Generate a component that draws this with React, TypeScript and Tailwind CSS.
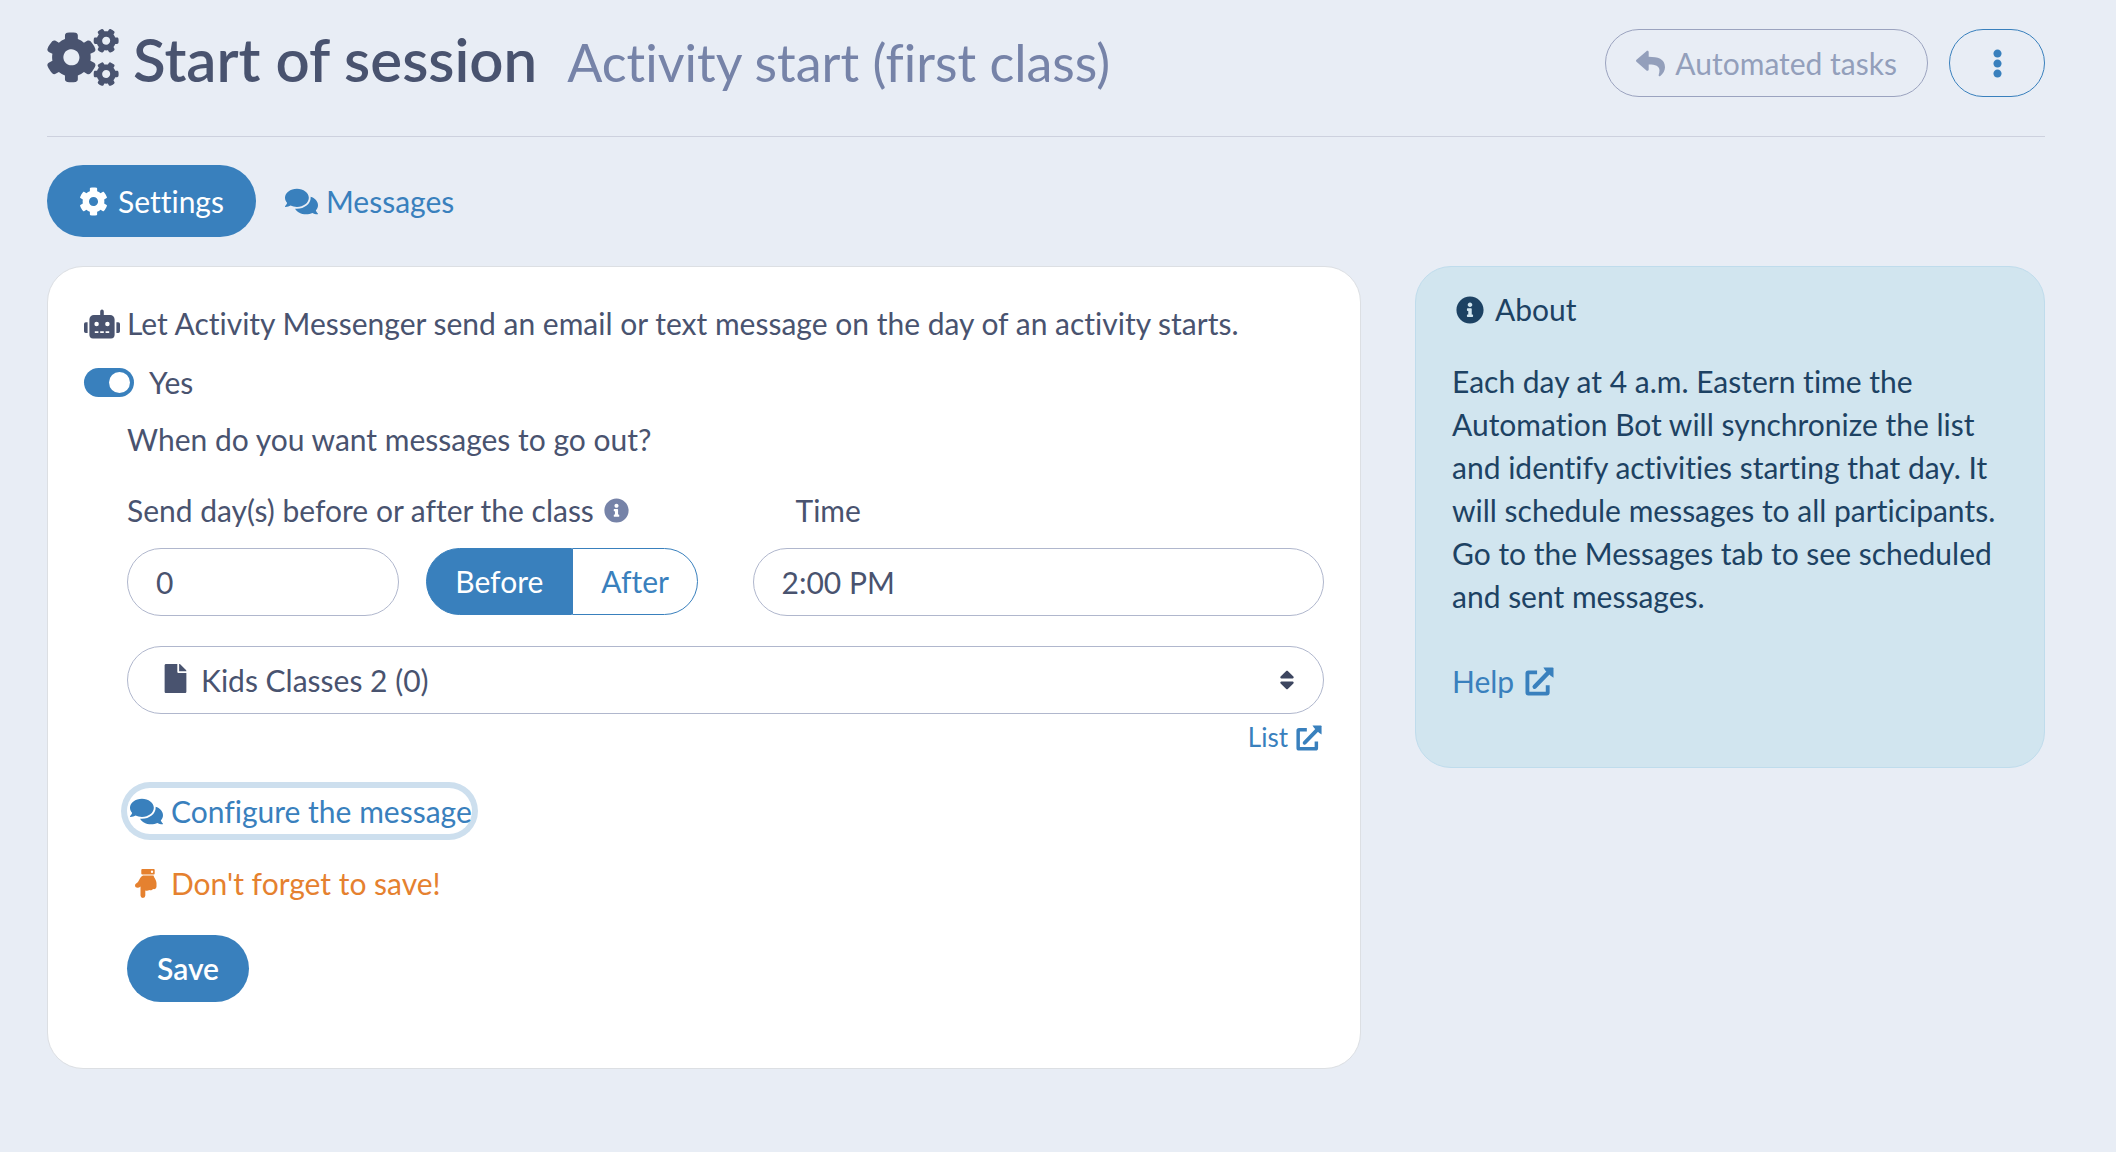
import { useState } from "react";
import {
  FaCog,
  FaCogs,
  FaComments,
  FaEllipsisV,
  FaFile,
  FaInfoCircle,
  FaReply,
  FaRobot,
  FaSort,
} from "react-icons/fa";

function ExternalLinkIcon({ className }: { className?: string }) {
  return (
    <svg viewBox="0 0 30 30" className={className} fill="none" aria-hidden="true">
      <path
        d="M12.500 5.500H3.500a1 1 0 0 0-1 1V26.500a1 1 0 0 0 1 1H22.500a1 1 0 0 0 1-1V19"
        stroke="currentColor"
        strokeWidth="4"
        strokeLinejoin="round"
      />
      <path d="M10 20.500L25 5" stroke="currentColor" strokeWidth="4.500" strokeLinecap="round" />
      <path d="M19 .5H28.500a1 1 0 0 1 1 1V11L26.500 9L21 3.500z" fill="currentColor" />
    </svg>
  );
}

function HandDownIcon({ className }: { className?: string }) {
  return (
    <svg viewBox="0 0 22 29" className={className} fill="currentColor" aria-hidden="true">
      <path
        fillRule="evenodd"
        d="M7.300 0H18.700a1 1 0 0 1 1 1V4.400a1 1 0 0 1-1 1H7.300a1 1 0 0 1-1-1V1a1 1 0 0 1 1-1zM17 1.500a1.200 1.200 0 1 0 0 2.400a1.200 1.200 0 0 0 0-2.400z"
      />
      <path d="M8 6.500H18.500C19 9 21.500 11 21.500 14V17.500c0 2-1.800 3-3.400 2.500c-1 1.200-2.600 1.500-3.800 1c-1 .8-2.300 1-4 .6V26.500a2.200 2.200 0 0 1-4.800 0V17.500C3.500 19.500 0 19 0 16.500C0 14.500 2 14.300 3 13C4.500 11 5 8 8 6.500z" />
    </svg>
  );
}

export default function App() {
  const [enabled, setEnabled] = useState(true);
  const [days, setDays] = useState("0");
  const [when, setWhen] = useState("before");
  const [time, setTime] = useState("2:00 PM");

  return (
    <div className="min-h-screen bg-[#e8edf5] pt-[29px] pr-[71px] pl-[47px] font-[Lato,sans-serif] text-[30px] leading-[43px] text-[#49536f] [font-variant-ligatures:none] [&_button]:cursor-pointer">
      <header className="flex items-start justify-between border-b border-[#cdd1de] pb-[39px]">
        <div className="flex items-start gap-[14px]">
          <FaCogs className="h-[57px] w-[72px]" />
          <h1 className="flex items-baseline gap-[30px] text-[60px] leading-[60px] font-semibold">
            Start of session
            <small className="text-[52px] font-normal text-[#7683a8]">
              Activity start (first class)
            </small>
          </h1>
        </div>
        <div className="flex gap-[21px]">
          <button className="flex h-[68px] items-center gap-[10px] rounded-full border border-[#9ba3bf] px-[30px] text-[#939fbb]">
            <FaReply className="size-[29px]" />
            Automated tasks
          </button>
          <button
            aria-label="More actions"
            className="flex h-[68px] w-24 items-center justify-center rounded-full border border-[#3980bd] text-[#3980bd]"
          >
            <FaEllipsisV className="size-[29px]" />
          </button>
        </div>
      </header>

      <nav className="mt-7 flex gap-[29px]">
        <a href="#settings" className="flex h-[72px] items-center gap-[10px] rounded-full bg-[#3980bd] px-8 text-white">
          <FaCog className="size-[29px]" />
          Settings
        </a>
        <a href="#messages" className="flex h-[72px] items-center gap-2 text-[#3980bd]">
          <FaComments className="size-[33px]" />
          Messages
        </a>
      </nav>

      <main className="mt-[29px] grid grid-cols-3 items-start gap-[54px]">
        <form
          className="col-span-2 rounded-[36px] border border-[#dcdfe3] bg-white px-9 pt-[35px] pb-[66px]"
          onSubmit={(e) => e.preventDefault()}
        >
          <p className="flex items-center gap-[7px]">
            <FaRobot className="size-9" />
            Let Activity Messenger send an email or text message on the day of an activity starts.
          </p>
          <label className="mt-4 flex items-center gap-[15px]">
            <input
              type="checkbox"
              checked={enabled}
              onChange={(e) => setEnabled(e.target.checked)}
              className="flex h-[29px] w-[50px] appearance-none items-center rounded-full bg-[#b3b9cd] px-1 before:size-[21px] before:rounded-full before:bg-white checked:justify-end checked:bg-[#3980bd]"
            />
            Yes
          </label>

          <div className="pl-[43px]">
            <p className="mt-[14px]">When do you want messages to go out?</p>
            <div className="mt-7 grid grid-cols-2 gap-[54px]">
              <div>
                <label htmlFor="days" className="flex items-center gap-[10px]">
                  Send day(s) before or after the class
                  <FaInfoCircle className="size-[25px] text-[#7683a8]" />
                </label>
                <div className="mt-4 grid grid-cols-2 gap-[27px]">
                  <input
                    id="days"
                    type="text"
                    value={days}
                    onChange={(e) => setDays(e.target.value)}
                    className="h-[68px] w-full rounded-full border border-[#b0b7cd] px-7"
                  />
                  <div className="flex h-[67px]">
                    <button
                      type="button"
                      aria-pressed={when === "before"}
                      onClick={() => setWhen("before")}
                      className="rounded-l-full border border-[#3980bd] px-7 text-[#3980bd] aria-pressed:bg-[#3980bd] aria-pressed:text-white"
                    >
                      Before
                    </button>
                    <button
                      type="button"
                      aria-pressed={when === "after"}
                      onClick={() => setWhen("after")}
                      className="rounded-r-full border border-[#3980bd] px-7 text-[#3980bd] aria-pressed:bg-[#3980bd] aria-pressed:text-white"
                    >
                      After
                    </button>
                  </div>
                </div>
              </div>
              <div>
                <label htmlFor="time" className="block pl-[43px]">
                  Time
                </label>
                <input
                  id="time"
                  type="text"
                  value={time}
                  onChange={(e) => setTime(e.target.value)}
                  className="mt-4 h-[68px] w-full rounded-full border border-[#b0b7cd] px-7"
                />
              </div>
            </div>

            <div className="relative mt-[30px]">
              <FaFile className="pointer-events-none absolute top-[18px] left-[34px] size-[29px]" />
              <select
                aria-label="List"
                className="h-[68px] w-full appearance-none rounded-full border border-[#b0b7cd] bg-transparent pr-16 pl-[73px]"
              >
                <option>Kids Classes 2 (0)</option>
              </select>
              <FaSort className="pointer-events-none absolute top-[22px] right-[25px] size-6 text-[#3d4660]" />
            </div>
            <div className="mt-[2px] flex justify-end pr-[2px]">
              <a href="#list" className="flex items-center gap-2 text-[26px] text-[#3980bd]">
                List
                <ExternalLinkIcon className="size-[26px]" />
              </a>
            </div>

            <button
              type="button"
              className="mt-[29px] flex h-[46px] items-center gap-2 rounded-full pl-[3px] text-[#3980bd] ring-6 ring-[#cddfee]"
            >
              <FaComments className="size-[33px]" />
              Configure the message
            </button>
            <p className="mt-7 flex items-center gap-[14px] pl-2 text-[#e5812f]">
              <HandDownIcon className="h-[29px] w-[22px]" />
              Don't forget to save!
            </p>
            <button
              type="submit"
              className="mt-[30px] h-[67px] rounded-full bg-[#3980bd] px-[30px] font-semibold text-white"
            >
              Save
            </button>
          </div>
        </form>

        <aside className="rounded-[36px] border border-[#bfdcec] bg-[#d1e5ef] px-9 pt-[21px] pb-[64px] text-[#1d4263]">
          <h2 className="flex items-center gap-[11px] pl-1">
            <FaInfoCircle className="size-[28px]" />
            About
          </h2>
          <p className="mt-[29px]">
            Each day at 4 a.m. Eastern time the Automation Bot will synchronize the list and identify
            activities starting that day. It will schedule messages to all participants. Go to the
            Messages tab to see scheduled and sent messages.
          </p>
          <a href="#help" className="mt-[42px] inline-flex items-center gap-[11px] text-[#3980bd]">
            Help
            <ExternalLinkIcon className="size-[29px]" />
          </a>
        </aside>
      </main>
    </div>
  );
}
